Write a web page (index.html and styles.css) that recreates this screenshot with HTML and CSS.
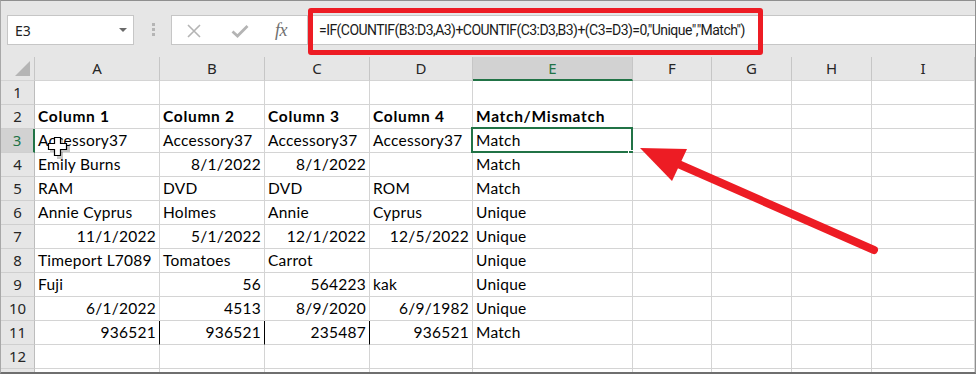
FILE: index.html
```html
<!DOCTYPE html>
<html>
<head>
<meta charset="utf-8">
<link rel="stylesheet" href="styles.css">
</head>
<body>
<div class="app">
  <div class="toolbar">
    <div class="namebox"><span class="nb-text">E3</span><span class="caret"></span></div>
    <div class="grip"><i></i><i></i><i></i></div>
    <div class="fxbox">
      <svg class="ico ico-x" width="16" height="14" viewBox="0 0 16 14"><path d="M2 1 L14 13 M14 1 L2 13" stroke="#b4b4b4" stroke-width="1.6" fill="none"/></svg>
      <svg class="ico ico-ok" width="18" height="14" viewBox="0 0 18 14"><path d="M1.5 7.5 L6.5 12 L16.5 2" stroke="#b4b4b4" stroke-width="2.8" fill="none"/></svg>
      <span class="fx">fx</span>
    </div>
    <div class="formula">=IF(COUNTIF(B3:D3,A3)+COUNTIF(C3:D3,B3)+(C3=D3)=0,"Unique","Match")</div>
  </div>
  <div class="sheet">
    <div class="corner"><svg width="16" height="16" viewBox="0 0 16 16"><polygon points="15,0 15,15 0,15" fill="#b5b5b5"/></svg></div>
    <div class="ch">A</div><div class="ch">B</div><div class="ch">C</div><div class="ch">D</div><div class="ch ch-sel">E</div><div class="ch">F</div><div class="ch">G</div><div class="ch">H</div><div class="ch">I</div>

    <div class="rh">1</div><div class="c"></div><div class="c"></div><div class="c"></div><div class="c"></div><div class="c"></div><div class="c"></div><div class="c"></div><div class="c"></div><div class="c"></div>

    <div class="rh">2</div><div class="c b">Column 1</div><div class="c b">Column 2</div><div class="c b">Column 3</div><div class="c b">Column 4</div><div class="c b">Match/Mismatch</div><div class="c"></div><div class="c"></div><div class="c"></div><div class="c"></div>

    <div class="rh rh-sel">3</div><div class="c">Accessory37</div><div class="c">Accessory37</div><div class="c">Accessory37</div><div class="c">Accessory37</div><div class="c active">Match<span class="sel"></span><span class="handle"></span></div><div class="c"></div><div class="c"></div><div class="c"></div><div class="c"></div>

    <div class="rh">4</div><div class="c">Emily Burns</div><div class="c r">8/1/2022</div><div class="c r">8/1/2022</div><div class="c"></div><div class="c">Match</div><div class="c"></div><div class="c"></div><div class="c"></div><div class="c"></div>

    <div class="rh">5</div><div class="c">RAM</div><div class="c">DVD</div><div class="c">DVD</div><div class="c">ROM</div><div class="c">Match</div><div class="c"></div><div class="c"></div><div class="c"></div><div class="c"></div>

    <div class="rh">6</div><div class="c">Annie Cyprus</div><div class="c">Holmes</div><div class="c">Annie</div><div class="c">Cyprus</div><div class="c">Unique</div><div class="c"></div><div class="c"></div><div class="c"></div><div class="c"></div>

    <div class="rh">7</div><div class="c r">11/1/2022</div><div class="c r">5/1/2022</div><div class="c r">12/1/2022</div><div class="c r">12/5/2022</div><div class="c">Unique</div><div class="c"></div><div class="c"></div><div class="c"></div><div class="c"></div>

    <div class="rh">8</div><div class="c">Timeport L7089</div><div class="c">Tomatoes</div><div class="c">Carrot</div><div class="c"></div><div class="c">Unique</div><div class="c"></div><div class="c"></div><div class="c"></div><div class="c"></div>

    <div class="rh">9</div><div class="c">Fuji</div><div class="c r">56</div><div class="c r">564223</div><div class="c">kak</div><div class="c">Unique</div><div class="c"></div><div class="c"></div><div class="c"></div><div class="c"></div>

    <div class="rh">10</div><div class="c r">6/1/2022</div><div class="c r">4513</div><div class="c r">8/9/2020</div><div class="c r">6/9/1982</div><div class="c">Unique</div><div class="c"></div><div class="c"></div><div class="c"></div><div class="c"></div>

    <div class="rh">11</div><div class="c r blk">936521</div><div class="c r blk">936521</div><div class="c r blk">235487</div><div class="c r">936521</div><div class="c">Match</div><div class="c"></div><div class="c"></div><div class="c"></div><div class="c"></div>

    <div class="rh">12</div><div class="c"></div><div class="c"></div><div class="c"></div><div class="c"></div><div class="c"></div><div class="c"></div><div class="c"></div><div class="c"></div><div class="c"></div>

    <div class="rh"></div><div class="c"></div><div class="c"></div><div class="c"></div><div class="c"></div><div class="c"></div><div class="c"></div><div class="c"></div><div class="c"></div><div class="c"></div>
  </div>

  <div class="redbox"></div>
  <svg class="overlay" width="976" height="374" viewBox="0 0 976 374">
    <line x1="874" y1="250" x2="676" y2="163" stroke="#ed1c24" stroke-width="8" stroke-linecap="round"/>
    <polygon points="640,148 687,149 672,181" fill="#ed1c24"/>
    <g transform="translate(48 137)">
      <path d="M8 1 H14 V8 H21 V14 H14 V21 H8 V14 H1 V8 H8 Z" fill="#000" opacity="0.22" transform="translate(1 1)"/>
      <path d="M6.5 0.5 H12.5 V6.5 H18.5 V12.5 H12.5 V18.5 H6.5 V12.5 H0.5 V6.5 H6.5 Z" fill="#fff" stroke="#000" stroke-width="1.2"/>
    </g>
  </svg>
</div>
</body>
</html>
```

FILE: styles.css
```css
* { box-sizing: border-box; }
html, body { margin: 0; padding: 0; }
body { width: 976px; height: 374px; overflow: hidden; background: #fff; }

.app {
  position: relative;
  width: 976px;
  height: 374px;
  overflow: hidden;
  background: #e6e6e6;
  border-top: 1px solid #8f8f8f;
  border-left: 1px solid #a8a8a8;
  border-right: 1px solid #8f8f8f;
  border-bottom: 2px solid #6f6f6f;
  font-family: "Noto Sans", "Open Sans", sans-serif;
}

/* formula bar */
.toolbar {
  height: 56px;
  display: flex;
  align-items: flex-start;
  padding-top: 14px;
  padding-left: 6px;
}
.namebox {
  width: 127px;
  height: 30px;
  background: #fff;
  border: 1px solid #c6c6c6;
  display: flex;
  align-items: center;
  justify-content: space-between;
  padding: 0 6px 0 7px;
  font-size: 14px;
  color: #222;
}
.caret {
  width: 0; height: 0;
  border-left: 4px solid transparent;
  border-right: 4px solid transparent;
  border-top: 4px solid #6a6a6a;
}
.grip {
  margin-left: 18px;
  margin-top: 8px;
  display: flex;
  flex-direction: column;
  gap: 2px;
}
.grip i { display: block; width: 3px; height: 3px; background: #b5b5b5; }
.fxbox {
  margin-left: 16px;
  width: 137px;
  height: 30px;
  background: #fff;
  border: 1px solid #c6c6c6;
  display: flex;
  align-items: center;
  padding-left: 14px;
}
.ico-x { margin-top: 1px; }
.ico-ok { margin-left: 29px; margin-top: 2px; }
.fx {
  margin-left: 26px;
  font-family: "Liberation Serif", "DejaVu Serif", serif;
  font-style: italic;
  font-size: 18px;
  color: #6f6f6f;
  letter-spacing: -0.5px;
}
.formula {
  flex: 1;
  height: 30px;
  background: #fff;
  border: 1px solid #c6c6c6;
  border-left: 0;
  border-right: 0;
  padding-left: 11px;
  font-family: "Roboto", "Noto Sans", sans-serif;
  font-size: 14px;
  letter-spacing: -0.55px;
  line-height: 28px;
  color: #1a1a1a;
  white-space: nowrap;
}

/* sheet */
.sheet {
  display: grid;
  grid-template-columns: 34px 125px 105px 105px 103px 160px 79px 80px 80px 1fr;
  grid-auto-rows: 24px;
}
.corner {
  background: #e6e6e6;
  border-right: 1px solid #c6c6c6;
  border-bottom: 1px solid #d4d4d4;
  display: flex;
  align-items: flex-end;
  justify-content: flex-end;
  padding: 0 3px 3px 0;
}
.corner svg { display: block; }
.ch {
  background: #e6e6e6;
  border-right: 1px solid #c6c6c6;
  border-bottom: 1px solid #d4d4d4;
  text-align: center;
  font-size: 15px;
  line-height: 23px;
  color: #262626;
}
.ch-sel {
  background: #d2d2d2;
  color: #217346;
  border-bottom: 2px solid #217346;
}
.rh {
  background: #e6e6e6;
  border-right: 1px solid #bdbdbd;
  border-bottom: 1px solid #cfcfcf;
  text-align: center;
  font-size: 15px;
  line-height: 23px;
  color: #262626;
}
.rh-sel {
  background: #d2d2d2;
  color: #217346;
  border-right: 2px solid #217346;
}
.c {
  position: relative;
  background: #fff;
  border-right: 1px solid #d4d4d4;
  border-bottom: 1px solid #d4d4d4;
  padding: 0 2px 0 3px;
  font-family: "Lato", "Liberation Sans", sans-serif;
  font-size: 15.5px;
  letter-spacing: 0.25px;
  line-height: 23px;
  color: #000;
  white-space: nowrap;
}
.r { text-align: right; padding-right: 3px; }
.b { font-weight: bold; letter-spacing: 0.7px; }
.blk { border-right-color: #000; }

.sel {
  position: absolute;
  left: -2px;
  top: -2px;
  width: 162px;
  height: 26px;
  border: 2px solid #217346;
}
.handle {
  position: absolute;
  left: 155px;
  top: 21px;
  width: 7px;
  height: 7px;
  background: #217346;
  border: 1px solid #fff;
}

.redbox {
  position: absolute;
  left: 307px;
  top: 7px;
  width: 455px;
  height: 47px;
  border: 5px solid #ed1c24;
  border-radius: 3px;
}
.overlay {
  position: absolute;
  left: -1px;
  top: -1px;
  pointer-events: none;
}
```
